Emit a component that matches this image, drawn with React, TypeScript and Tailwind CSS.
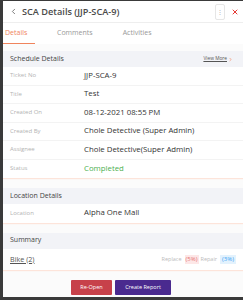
import { ChevronLeft, X, ChevronRight } from 'lucide-react';

const font = { fontFamily: '"Open Sans", "Liberation Sans", sans-serif' };

const schedule: [string, string, string?][] = [
  ['Ticket No', 'JJP-SCA-9'],
  ['Title', 'Test'],
  ['Created On', '08-12-2021 08:55 PM'],
  ['Created By', 'Chole Detective (Super Admin)'],
  ['Assignee', 'Chole Detective(Super Admin)'],
  ['Status', 'Completed', 'text-[#4caf50]'],
];

function Row({ label, value, cls }: { label: string; value: string; cls?: string }) {
  return (
    <div className="flex items-center h-[18.5px] border-b border-[#f3f3f3] last:border-b-0 pl-[7px]">
      <span className="w-[74px] text-[6px] text-[#b3b3b3]">{label}</span>
      <span className={`text-[7.8px] ${cls ?? 'text-[#333]'}`}>{value}</span>
    </div>
  );
}

function Section({
  title,
  extra,
  children,
  className = '',
}: {
  title: string;
  extra?: React.ReactNode;
  children: React.ReactNode;
  className?: string;
}) {
  return (
    <div className={`bg-white shadow-[0_1px_1px_#fde4da] ${className}`}>
      <div className="flex items-center justify-between h-[16px] bg-[#f2f3f7] pl-[7px] pr-[10px]">
        <span className="text-[7px] text-[#444]">{title}</span>
        {extra}
      </div>
      {children}
    </div>
  );
}

export default function App() {
  return (
    <div
      style={font}
      className="w-[243px] h-[300px] bg-white border-l-[3px] border-t border-b-[3px] border-[#3a3a3a] flex flex-col overflow-hidden"
    >
      <div className="flex items-center h-[22px] shrink-0 border-b border-[#eee] pl-[6px] pr-[4px]">
        <ChevronLeft className="w-[9px] h-[9px] text-[#555]" strokeWidth={2} />
        <span className="ml-[4px] text-[9.2px] font-semibold text-[#4a4a4a]">SCA Details (JJP-SCA-9)</span>
        <div className="ml-auto w-[10px] h-[16px] rounded-[2px] border border-[#e6e6e6] flex items-center justify-center text-[6px] text-[#aaa] leading-none">
          ⋮
        </div>
        <X className="ml-[6px] w-[8px] h-[8px] text-[#e53935]" strokeWidth={3} />
      </div>
      <div className="flex h-[21px] shrink-0 text-[7px] text-[#999]">
        <div className="w-[32px] flex items-center border-b-[1.5px] border-[#f0845c] text-[#f0845c] pl-[2px]">
          Details
        </div>
        <div className="ml-[22px] flex items-center">Comments</div>
        <div className="ml-[30px] flex items-center">Activities</div>
      </div>
      <div className="flex-1 bg-[#fbfbfb] pt-[7px] flex flex-col">
        <Section
          title="Schedule Details"
          extra={
            <span className="flex items-center text-[4.8px] text-[#555] underline">
              View More <ChevronRight className="ml-[1px] w-[5px] h-[5px] text-[#f0845c]" strokeWidth={3} />
            </span>
          }
        >
          {schedule.map(([l, v, c]) => (
            <Row key={l} label={l} value={v} cls={c} />
          ))}
        </Section>
        <Section title="Location Details" className="mt-[10px]">
          <Row label="Location" value="Alpha One Mall" />
        </Section>
        <Section title="Summary" className="mt-[10px]">
          <div className="flex items-center h-[21px] pl-[7px] pr-[7px]">
            <span className="text-[7.2px] text-[#555] underline">Bike (2)</span>
            <span className="ml-auto text-[5.5px] text-[#bbb]">Replace</span>
            <span className="ml-[3px] px-[1px] text-[6px] text-[#e57373] bg-[#fde7e7]">(5%)</span>
            <span className="ml-[2px] text-[5.5px] text-[#bbb]">Repair</span>
            <span className="ml-[3px] px-[2px] text-[6px] text-[#42a5f5] bg-[#e3f2fd]">(3%)</span>
          </div>
        </Section>
        <div className="flex justify-center gap-[3px] mt-[10px] pr-[4px]">
          <button className="w-[41px] h-[15px] bg-[#c7414a] text-white text-[5.5px] rounded-[1px]">Re-Open</button>
          <button className="w-[56px] h-[15px] bg-[#4a2a8f] text-white text-[5.5px] rounded-[1px]">Create Report</button>
        </div>
      </div>
    </div>
  );
}
